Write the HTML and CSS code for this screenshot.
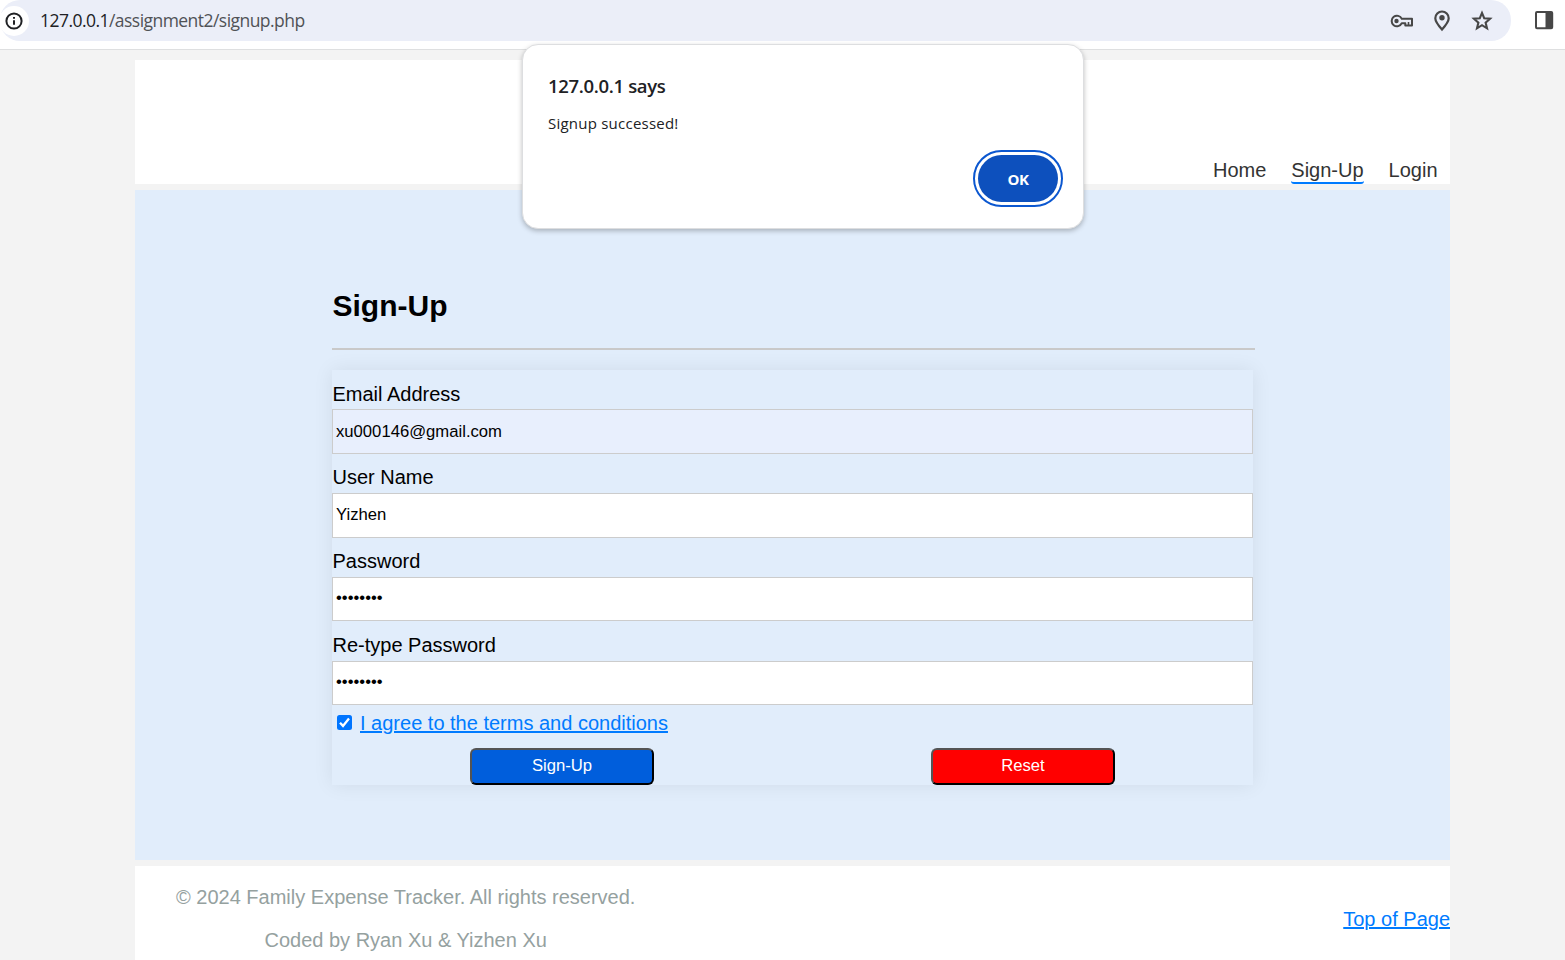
FILE: index.html
```html
<!DOCTYPE html>
<html lang="en">
<head>
<meta charset="utf-8">
<title>Sign-Up</title>
<link rel="stylesheet" href="styles.css">
</head>
<body>
<div class="toolbar">
  <div class="address">
    <span class="site-info"><svg width="20" height="20" viewBox="0 0 20 20"><circle cx="10" cy="10" r="7.6" fill="none" stroke="#202124" stroke-width="2"/><path d="M10 9.2v4.600M10 5.900v1.900" stroke="#202124" stroke-width="2"/></svg></span>
    <span class="url">127.0.0.1<span class="path">/assignment2/signup.php</span></span>
    <div class="actions">
      <svg width="24" height="24" viewBox="0 0 24 24" fill="none" stroke="#474747" stroke-width="2"><path d="M11.800 9.800A5.300 5.300 0 1 0 11.800 14.200H15.300V16.500H22V9.800Z" stroke-linejoin="round"/><circle cx="6.500" cy="12" r="2.200" fill="#474747" stroke="none"/><path d="M18.500 13v3" stroke-width="1.600"/></svg>
      <svg width="24" height="24" viewBox="0 0 24 24" fill="none" stroke="#474747" stroke-width="2.200"><path d="M12 20.500C8 16 5.300 12.500 5.300 9.200a6.700 6.700 0 0 1 13.400 0c0 3.300-2.700 6.800-6.700 11.300Z"/><circle cx="12" cy="8.800" r="2.700" fill="#474747" stroke="none"/></svg>
      <svg width="24" height="24" viewBox="0 0 24 24" fill="none" stroke="#474747" stroke-width="2.100"><path d="M12 3.900l2.200 5.300 5.900.5-4.500 3.900 1.400 5.700-5-3.100-5 3.100 1.400-5.700-4.500-3.900 5.900-.5Z"/></svg>
    </div>
  </div>
  <svg class="panel-icon" width="20" height="20" viewBox="0 0 20 20"><rect x="2" y="2" width="16.200" height="16.200" rx="1" fill="#fff" stroke="#474747" stroke-width="2"/><path d="M11.500 2h6.700v16.200h-6.700z" fill="#474747"/></svg>
</div>

<div class="page">
  <header class="header">
    <nav class="nav"><a>Home</a><a class="active">Sign-Up</a><a>Login</a></nav>
  </header>
  <main class="main">
    <h1 class="title">Sign-Up</h1>
    <div class="rule"></div>
    <form class="form">
      <div class="field"><label>Email Address</label><div class="input autofill">xu000146@gmail.com</div></div>
      <div class="field"><label>User Name</label><div class="input raised">Yizhen</div></div>
      <div class="field"><label>Password</label><div class="input short">••••••••</div></div>
      <div class="field"><label>Re-type Password</label><div class="input short">••••••••</div></div>
      <div class="terms"><svg width="15" height="15" viewBox="0 0 15 15"><rect width="15" height="15" rx="2.500" fill="#0075ff"/><path d="M3 7.800l3 3.100 6-7.400" fill="none" stroke="#fff" stroke-width="2.300"/></svg><a>I agree to the terms and conditions</a></div>
      <div class="buttons"><button type="button" class="btn submit">Sign-Up</button><button type="button" class="btn reset">Reset</button></div>
    </form>
  </main>
  <footer class="footer">
    <div class="credits"><p>© 2024 Family Expense Tracker. All rights reserved.</p><p>Coded by Ryan Xu &amp; Yizhen Xu</p></div>
    <a class="top-link">Top of Page</a>
  </footer>
</div>

<div class="dialog">
  <div class="dialog-title">127.0.0.1 says</div>
  <div class="dialog-text">Signup successed!</div>
  <button type="button" class="ok">OK</button>
</div>
</body>
</html>
```
FILE: styles.css
```css
* { box-sizing: border-box; }
html, body { height: 100%; }
body { margin: 0; overflow: hidden; background: #f3f3f3; font: 20px/23px "Liberation Sans", Arial, sans-serif; color: #000; }
.toolbar { display: flex; height: 50px; background: #fff; border-bottom: 1px solid #dedfe0; }
.address { display: flex; align-items: center; width: 1511px; height: 41px; background: #ebeef8; border-radius: 20px; }
.site-info { display: flex; align-items: center; justify-content: center; width: 30px; height: 30px; margin-left: -1px; border-radius: 50%; background: #fff; }
.url { margin: -2px 0 0 11px; font: 17.5px/24px "Open Sans", sans-serif; letter-spacing: -0.54px; color: #202124; white-space: nowrap; }
.path { color: #505256; }
.actions { display: flex; gap: 16px; margin: 0 17px 0 auto; }
.panel-icon { margin: 10px 0 0 23px; }
.page { width: 1315px; margin: 10px 0 0 135px; }
.header { display: flex; align-items: flex-end; justify-content: flex-end; height: 124px; background: #fff; }
.nav { display: flex; gap: 25px; padding-right: 12.500px; color: #333; }
.nav a { height: 26px; padding-top: 1px; border-bottom: 2px solid transparent; border-radius: 3px; }
.nav .active { border-bottom-color: #007bff; }
.main { height: 670px; margin: 6px 0; padding: 99px 195px 0 197px; background: #e1edfb; }
.title { margin: 0; padding-left: 0.500px; font-size: 30px; line-height: 34px; }
.rule { height: 2px; margin-top: 25px; background: #c9c9c9; }
.form { width: 921px; height: 415px; margin-top: 20px; box-shadow: 0 0 19px rgba(0, 0, 0, .075); }
.field { height: 84px; padding-top: 12px; }
.field label { display: block; height: 27px; padding-left: 0.500px; }
.field:first-child { padding-top: 13px; }
.field:first-child label { height: 26px; }
.input { height: 45px; padding: 12px 3px; border: 1px solid #ccc; background: #fff; font-size: 16.67px; line-height: 19px; }
.input.raised { padding-top: 11px; }
.input.short { height: 44px; padding-top: 10px; }
.autofill { background: #e8effd; }
.terms { display: flex; height: 42px; padding: 6px 0 0 5px; color: #007bff; text-decoration: underline; text-underline-offset: 1px; }
.terms svg { margin: 3px 8px 0 0; }
.buttons { display: flex; justify-content: space-between; padding: 0 138px; }
.btn { width: 184px; height: 37px; padding: 0 0 2px; border: 2px outset #000; border-radius: 6px; color: #fff; font: 16.67px "Liberation Sans", Arial, sans-serif; }
.submit { background: #005edc; }
.reset { background: #f00; }
.footer { display: flex; justify-content: space-between; height: 104px; background: #fff; }
.credits { padding: 20px 0 0 41px; text-align: center; color: #95a19f; }
.credits p { margin: 0 0 20px; }
.top-link { margin-top: 42px; color: #007bff; text-decoration: underline; text-underline-offset: 1px; }
.dialog { position: absolute; left: 522px; top: 44px; width: 562px; height: 185px; padding: 29px 25px; border: 1px solid #dddee0; border-radius: 16px; background: #fff; box-shadow: 0 2px 5px rgba(0, 0, 0, .25); font-family: "Open Sans", sans-serif; color: #202124; }
.dialog-title { font-size: 18.500px; line-height: 24px; font-weight: 600; letter-spacing: -0.330px; }
.dialog-text { margin-top: 14px; font-size: 15px; line-height: 22px; letter-spacing: 0.230px; }
.ok { display: block; width: 80px; height: 47px; margin: 21px 0 0 auto; padding: 0; border: 0; border-radius: 24px; outline: 2px solid #0b57d0; outline-offset: 3px; background: #0d50bd; color: #fff; font: 700 15px "Open Sans", sans-serif; letter-spacing: -0.400px; }
```
